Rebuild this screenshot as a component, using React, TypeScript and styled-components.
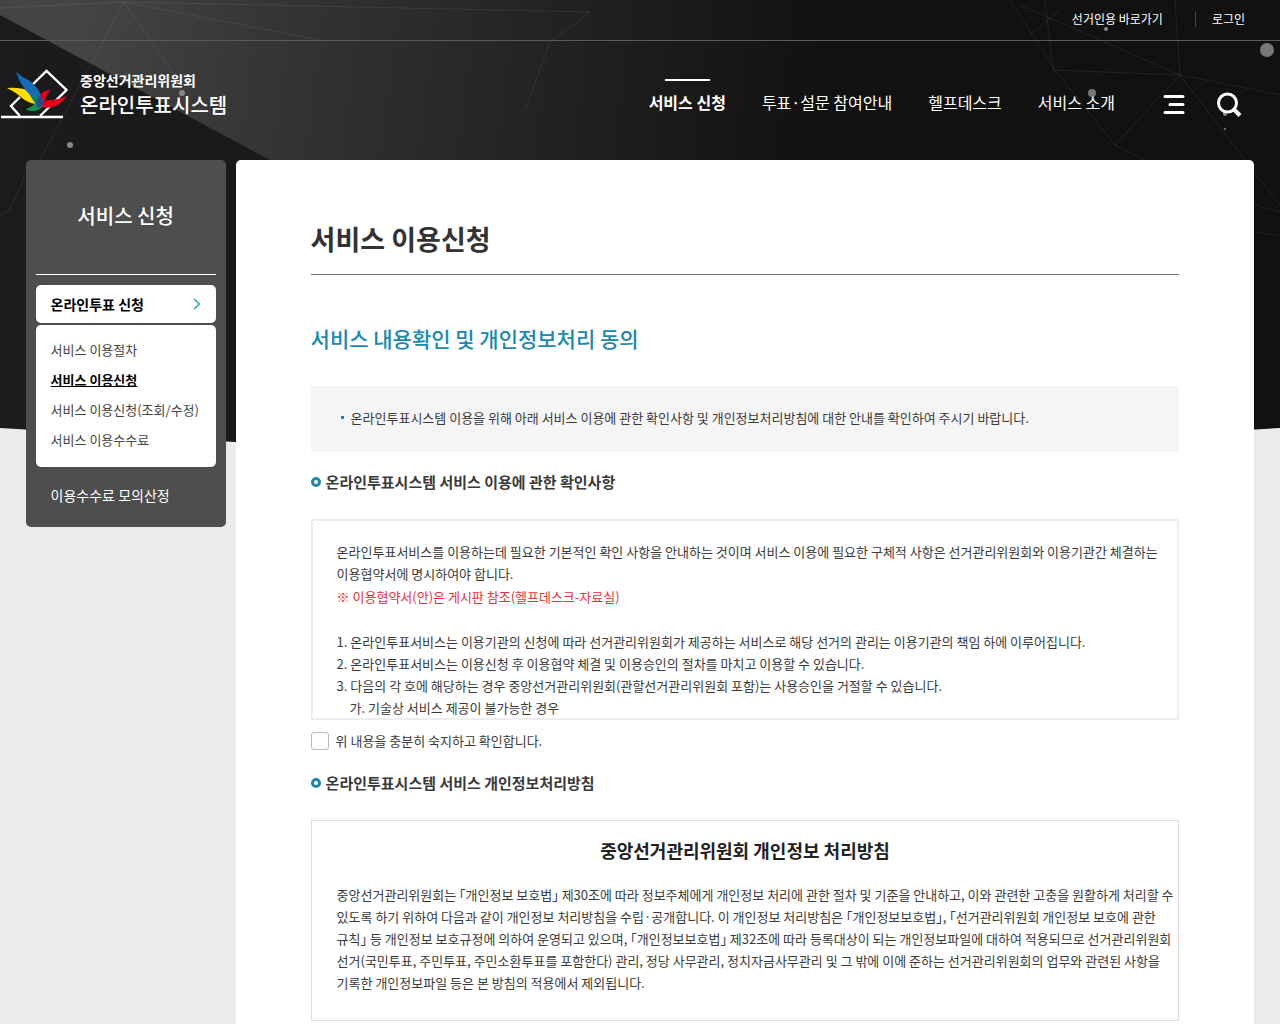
import React from 'react';
import styled, { createGlobalStyle } from 'styled-components';

const Global = createGlobalStyle`
  *, *::before, *::after { box-sizing: border-box; }
  body {
    margin: 0;
    background: #ebebeb;
    color: #3a3a3a;
    font: 400 13px/22px "Noto Sans CJK KR", "Noto Sans", sans-serif;
    word-break: keep-all;
  }
  h1, h2, h3, h4, p, ul, ol { margin: 0; padding: 0; }
  ul, ol { list-style: none; }
  a { color: inherit; text-decoration: none; }
  button { border: 0; padding: 0; background: none; color: inherit; font: inherit; cursor: pointer; }
`;

const Page = styled.div`
  position: relative;
  height: 100vh;
  overflow: hidden;
`;

const Backdrop = styled.svg`
  position: absolute;
  top: 0;
  left: 0;
  width: 100%;
  height: 500px;
  z-index: -1;
`;

const UtilBar = styled.nav`
  display: flex;
  justify-content: flex-end;
  align-items: center;
  height: 41px;
  padding: 0 35px 3px 0;
  border-bottom: 1px solid #5a5a5a;
  color: #fff;
  font-size: 12px;
  line-height: 16px;
`;

const UtilLink = styled.a`
  & + & {
    margin-left: 32px;
    padding-left: 16px;
    border-left: 1px solid #444;
  }
`;

const Header = styled.header`
  display: flex;
  justify-content: space-between;
  height: 119px;
  padding: 28px 37px 0 0;
  color: #fff;
`;

const Brand = styled.a`
  display: flex;
  align-items: flex-start;
  gap: 11px;
`;

const BrandText = styled.span`
  display: flex;
  flex-direction: column;
  white-space: nowrap;
`;

const BrandOrg = styled.span`
  font-size: 14px;
  font-weight: 700;
  line-height: 22px;
`;

const BrandName = styled.span`
  font-size: 20px;
  font-weight: 500;
  line-height: 28px;
`;

const HeaderRight = styled.div`
  display: flex;
  align-items: flex-start;
`;

const Menu = styled.ul`
  display: flex;
  gap: 36px;
  margin-right: 48px;
  font-size: 16px;
  line-height: 24px;
  white-space: nowrap;
`;

const MenuLink = styled.a<{ $active?: boolean }>`
  display: flex;
  flex-direction: column;
  align-items: center;
  gap: 9px;
  padding-top: 10px;
  font-weight: ${p => (p.$active ? 700 : 400)};
  &::before {
    content: "";
    width: 45px;
    height: 2px;
    background: ${p => (p.$active ? '#fff' : 'transparent')};
  }
`;

const IconButton = styled.button`
  display: flex;
  margin-top: 22px;
  & + & { margin-left: 31px; }
`;

const Columns = styled.div`
  display: flex;
  align-items: flex-start;
  gap: 10px;
  width: 96%;
  margin: 0 auto;
`;

const Side = styled.aside`
  flex: 0 0 200px;
  padding: 0 10px 17px;
  border-radius: 5px;
  background: #4e4e4e;
  color: #fff;
`;

const SideTitle = styled.h2`
  height: 115px;
  margin-bottom: 10px;
  padding-top: 41px;
  border-bottom: 1px solid #fff;
  font-size: 20px;
  font-weight: 500;
  line-height: 30px;
  text-align: center;
`;

const SideCurrent = styled.a`
  display: flex;
  align-items: center;
  justify-content: space-between;
  height: 38px;
  padding: 0 15px 1px;
  border-radius: 5px;
  background: #fff;
  color: #000;
  font-size: 14px;
  font-weight: 700;
`;

const SideList = styled.ul`
  margin: 2px 0 13px;
  padding: 10px 15px 12px;
  border-radius: 5px;
  background: #fff;
  color: #444;
  line-height: 30px;
`;

const SideLink = styled.a<{ $active?: boolean }>`
  ${p => p.$active && 'color: #000; font-weight: 700; text-decoration: underline;'}
`;

const SideItem = styled.a`
  display: block;
  padding-left: 15px;
  font-size: 14px;
  line-height: 30px;
`;

const Main = styled.main`
  flex: 1;
  min-width: 0;
  padding: 55px 75px 40px;
  border-radius: 5px 5px 0 0;
  background: #fff;
`;

const Title = styled.h1`
  height: 60px;
  border-bottom: 1px solid #777;
  color: #333;
  font-size: 27px;
  font-weight: 700;
  line-height: 48px;
`;

const Subtitle = styled.h2`
  margin: 47px 0 32px;
  color: #2188ad;
  font-size: 21px;
  font-weight: 500;
  line-height: 32px;
`;

const Notice = styled.p`
  display: flex;
  align-items: center;
  gap: 7px;
  height: 66px;
  padding: 0 30px 3px;
  background: #f5f5f5;
  &::before {
    content: "";
    width: 3px;
    height: 3px;
    background: #2878ae;
  }
`;

const Section = styled.h3`
  display: flex;
  align-items: center;
  gap: 5px;
  margin: 17px 0 24px;
  font-size: 15px;
  font-weight: 700;
  line-height: 26px;
  &::before {
    content: "";
    width: 10px;
    height: 10px;
    border: 3px solid #2188ad;
    border-radius: 50%;
  }
`;

const Terms = styled.div`
  height: 201px;
  padding: 20px 0 0 24px;
  overflow: hidden;
  border: 2px solid #eee;
`;

const Policy = styled(Terms)`
  padding: 13px 0 0 25px;
  border: 1px solid #ddd;
`;

const Warning = styled.p`
  margin: 1px 0 23px;
  color: #e0353d;
`;

const SubItem = styled.li`
  padding-left: 13px;
`;

const PolicyTitle = styled.h4`
  margin-bottom: 18px;
  padding-right: 25px;
  color: #222;
  font-size: 18px;
  font-weight: 700;
  line-height: 32px;
  text-align: center;
`;

const Agree = styled.label`
  display: flex;
  align-items: center;
  gap: 7px;
  margin: 10px 0 18px;
`;

const Check = styled.input`
  appearance: none;
  width: 18px;
  height: 18px;
  margin: 0;
  border: 1px solid #bbb;
  border-radius: 3px;
  background: #fff;
`;

const sideLinks = ['서비스 이용절차', '서비스 이용신청', '서비스 이용신청(조회/수정)', '서비스 이용수수료'];
const menuLinks = ['서비스 신청', '투표·설문 참여안내', '헬프데스크', '서비스 소개'];

function Network() {
  return (
    <Backdrop viewBox="0 0 1280 500" preserveAspectRatio="none" aria-hidden="true">
      <defs>
        <linearGradient id="base" x1="0" x2="1" y1="0" y2="0">
          <stop offset="0" stopColor="#1b1b1b" />
          <stop offset="0.5" stopColor="#171717" />
          <stop offset="0.7" stopColor="#111" />
          <stop offset="1" stopColor="#111" />
        </linearGradient>
        <linearGradient id="beam" gradientUnits="userSpaceOnUse" x1="80" x2="820" y1="0" y2="100">
          <stop offset="0" stopColor="#444" />
          <stop offset="0.35" stopColor="#303030" />
          <stop offset="0.7" stopColor="#1f1f1f" />
          <stop offset="1" stopColor="#111" />
        </linearGradient>
      </defs>
      <path d="M0 0H1280V428L640 466L0 428Z" fill="url(#base)" />
      <path d="M0 0H1280V160H270L0 15Z" fill="url(#beam)" />
      <g fill="none" stroke="#fff" strokeOpacity="0.08">
        <path d="M0 8L124 2L40 160M124 2L178 80M124 2L330 42M124 2L590 12M590 12L550 42L525 110" />
        <path d="M1010 0L1055 70L1115 145L1145 160M1045 0L1053 70L1180 75L1280 95M1020 5L1180 75L1175 0M1180 75L1115 145M1180 75L1245 160L1280 205M1030 35L1060 10" />
        <path d="M0 215L10 210L25 175M1255 205L1280 212M1255 232L1280 236" />
      </g>
      <g fill="#888">
        <circle cx="70" cy="145" r="3" />
        <circle cx="182" cy="93" r="3" />
        <circle cx="1267" cy="50" r="7" fill="#777" />
        <circle cx="1092" cy="93" r="4" fill="#777" />
        <circle cx="1106" cy="29" r="2" />
        <circle cx="1225" cy="114" r="2" />
        <circle cx="1225" cy="129" r="1" />
      </g>
    </Backdrop>
  );
}

function Logo() {
  return (
    <svg width="69" height="50" viewBox="0 0 69 50" aria-hidden="true">
      <g fill="none" stroke="#fff" strokeWidth="2.4">
        <path d="M27 21L46.500 2L66.500 21L40 47M20 28L11 37L20 47" />
        <path d="M1 48H63" strokeWidth="2.600" />
      </g>
      <path d="M7 19Q22 18 31 23Q36 28 36 35Q28 34 22 29Q17 24 7 19Z" fill="#ffdf00" />
      <path d="M16 3Q23 9 30 12Q38 18 42 28Q43 34 39 38Q34 34 30 26Q20 16 16 3Z" fill="#1769b5" />
      <path d="M51 21Q48 23 46 29L43 36L40 34Q38 28 42 24Q45 21 51 21Z" fill="#e60019" />
      <path d="M67 27Q62 34 56 37Q49 40 41 38Q42 32 49 31Q58 31 67 27Z" fill="#e60019" />
      <path d="M26 40Q33 38 36 33L43 37Q39 42 33 42Q28 42 26 40Z" fill="#159447" />
      <path d="M33 24Q37 26 38 30L38 37Q33 32 33 24Z" fill="#0b8a5a" />
      <path d="M41 26Q44 32 43 36L38 39Q35 35 37 30Q38 27 41 26Z" fill="#224c8f" />
    </svg>
  );
}

export default function App() {
  return (
    <Page>
      <Global />
      <Network />
      <UtilBar>
        <UtilLink href="#voter">선거인용 바로가기</UtilLink>
        <UtilLink href="#login">로그인</UtilLink>
      </UtilBar>
      <Header>
        <Brand href="#home">
          <Logo />
          <BrandText>
            <BrandOrg>중앙선거관리위원회</BrandOrg>
            <BrandName>온라인투표시스템</BrandName>
          </BrandText>
        </Brand>
        <HeaderRight>
          <Menu>
            {menuLinks.map((label, i) => (
              <li key={label}><MenuLink href="#menu" $active={i === 0}>{label}</MenuLink></li>
            ))}
          </Menu>
          <IconButton aria-label="전체메뉴">
            <svg width="22" height="26" viewBox="0 0 22 26" fill="none" stroke="#fff" strokeWidth="3" strokeLinecap="round">
              <path d="M2 5.500H20M7 13.500H20M2 21.500H20" />
            </svg>
          </IconButton>
          <IconButton aria-label="검색">
            <svg width="27" height="26" viewBox="0 0 27 26" fill="none" stroke="#fff">
              <circle cx="11.500" cy="12" r="9" strokeWidth="3" />
              <path d="M18 18.500L24 24.500" strokeWidth="4" />
            </svg>
          </IconButton>
        </HeaderRight>
      </Header>
      <Columns>
        <Side>
          <SideTitle>서비스 신청</SideTitle>
          <SideCurrent href="#apply">
            온라인투표 신청
            <svg width="8" height="12" viewBox="0 0 8 12" fill="none" stroke="#2fa39a" strokeWidth="1.500" aria-hidden="true">
              <path d="M1 1L6.500 6L1 11" />
            </svg>
          </SideCurrent>
          <SideList>
            {sideLinks.map((label, i) => (
              <li key={label}><SideLink href="#side" $active={i === 1}>{label}</SideLink></li>
            ))}
          </SideList>
          <SideItem href="#fee">이용수수료 모의산정</SideItem>
        </Side>
        <Main>
          <Title>서비스 이용신청</Title>
          <Subtitle>서비스 내용확인 및 개인정보처리 동의</Subtitle>
          <Notice>온라인투표시스템 이용을 위해 아래 서비스 이용에 관한 확인사항 및 개인정보처리방침에 대한 안내를 확인하여 주시기 바랍니다.</Notice>
          <Section>온라인투표시스템 서비스 이용에 관한 확인사항</Section>
          <Terms>
            <p>
              온라인투표서비스를 이용하는데 필요한 기본적인 확인 사항을 안내하는 것이며 서비스 이용에 필요한 구체적 사항은 선거관리위원회와 이용기관간 체결하는<br />
              이용협약서에 명시하여야 합니다.
            </p>
            <Warning>※ 이용협약서(안)은 게시판 참조(헬프데스크-자료실)</Warning>
            <ol>
              <li>1. 온라인투표서비스는 이용기관의 신청에 따라 선거관리위원회가 제공하는 서비스로 해당 선거의 관리는 이용기관의 책임 하에 이루어집니다.</li>
              <li>2. 온라인투표서비스는 이용신청 후 이용협약 체결 및 이용승인의 절차를 마치고 이용할 수 있습니다.</li>
              <li>3. 다음의 각 호에 해당하는 경우 중앙선거관리위원회(관할선거관리위원회 포함)는 사용승인을 거절할 수 있습니다.</li>
              <SubItem>가. 기술상 서비스 제공이 불가능한 경우</SubItem>
            </ol>
          </Terms>
          <Agree><Check type="checkbox" />위 내용을 충분히 숙지하고 확인합니다.</Agree>
          <Section>온라인투표시스템 서비스 개인정보처리방침</Section>
          <Policy>
            <PolicyTitle>중앙선거관리위원회 개인정보 처리방침</PolicyTitle>
            <p>
              중앙선거관리위원회는 ｢개인정보 보호법｣ 제30조에 따라 정보주체에게 개인정보 처리에 관한 절차 및 기준을 안내하고, 이와 관련한 고충을 원활하게 처리할 수<br />
              있도록 하기 위하여 다음과 같이 개인정보 처리방침을 수립·공개합니다. 이 개인정보 처리방침은 ｢개인정보보호법｣, ｢선거관리위원회 개인정보 보호에 관한<br />
              규칙｣ 등 개인정보 보호규정에 의하여 운영되고 있으며, ｢개인정보보호법｣ 제32조에 따라 등록대상이 되는 개인정보파일에 대하여 적용되므로 선거관리위원회<br />
              선거(국민투표, 주민투표, 주민소환투표를 포함한다) 관리, 정당 사무관리, 정치자금사무관리 및 그 밖에 이에 준하는 선거관리위원회의 업무와 관련된 사항을<br />
              기록한 개인정보파일 등은 본 방침의 적용에서 제외됩니다.
            </p>
          </Policy>
        </Main>
      </Columns>
    </Page>
  );
}
